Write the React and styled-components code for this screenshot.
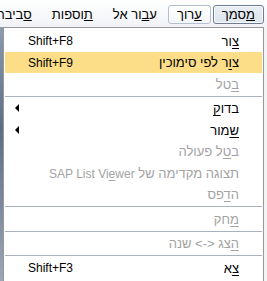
import styled, { createGlobalStyle } from "styled-components";

const GlobalStyle = createGlobalStyle`
    html, body {
        margin: 0;
        padding: 0;
        overflow: hidden;
    }
    body {
        font-family: "Liberation Sans", "DejaVu Sans", sans-serif;
        font-size: 13px;
        color: #000;
    }
`

const LatinText = styled.span`
    font-size: 12px;
`

const menuBar = [
    { id: 'doc', label: <><u>מ</u>סמך</>, state: 'open' },
    { id: 'edit', label: <><u>ע</u>רוך</>, state: 'hover' },
    { id: 'goto', label: <>ע<u>ב</u>ור אל</> },
    { id: 'extras', label: <><u>ת</u>וספות</> },
    { id: 'env', label: <><u>ס</u>ביבה</> },
];

const items = [
    { label: <><u>צ</u>ור</>, shortcut: 'Shift+F8' },
    { label: <>צ<u>ו</u>ר לפי סימוכין</>, shortcut: 'Shift+F9', active: true },
    { label: <><u>ב</u>טל</>, disabled: true },
    { separator: true },
    { label: <>בדו<u>ק</u></>, submenu: true },
    { label: <><u>ש</u>מור</>, submenu: true },
    { label: <>ב<u>ט</u>ל פעולה</>, disabled: true },
    { label: <>תצוגה מקדימה של <LatinText>SAP List Vi<u>e</u>wer</LatinText></>, disabled: true },
    { label: <>ה<u>ד</u>פס</>, disabled: true },
    { separator: true },
    { label: <><u>מ</u>חק</>, disabled: true },
    { separator: true },
    { label: <><u>ה</u>צג &lt;-&gt; שנה</>, disabled: true },
    { separator: true },
    { label: <><u>צ</u>א</>, shortcut: 'Shift+F3' },
];

export default function App() {
    return (
        <Screen>
            <GlobalStyle/>
            <MenuBar>
                {menuBar.map(({id, label, state}) => (
                    <BarItem key={id} $state={state}>{label}</BarItem>
                ))}
            </MenuBar>
            <Window>
                <LeftStrip/>
                <RightStrip/>
            </Window>
            <Dropdown>
                {items.map((item, i) => item.separator
                    ? <Separator key={i}/>
                    : (
                        <Item key={i} $active={item.active} $disabled={item.disabled}>
                            <Label>{item.label}</Label>
                            {item.shortcut && <Shortcut>{item.shortcut}</Shortcut>}
                            {item.submenu && <Arrow/>}
                        </Item>
                    ))}
            </Dropdown>
        </Screen>
    )
}

const Screen = styled.div`
    position: relative;
    width: 267px;
    height: 281px;
    display: flex;
    flex-direction: column;
    background: #eef1f5;
    overflow: hidden;
`
const MenuBar = styled.div`
    direction: rtl;
    display: flex;
    align-items: center;
    height: 27px;
    padding: 1px 3px 0 0;
    box-sizing: border-box;
    background: linear-gradient(#ffffff, #f1f3f7);
    gap: 2px;
    white-space: nowrap;
`
const BarItem = styled.div`
    flex-shrink: 0;
    height: 17px;
    line-height: 17px;
    padding: 0 8px;
    border: 1px solid ${props => props.$state === 'open' ? "#6e7d96" : props.$state === 'hover' ? "#b4bfd0" : "transparent"};
    border-radius: 3px;
    background: ${props => props.$state === 'open'
        ? "linear-gradient(#e9edf3, #dfe5ee)"
        : props.$state === 'hover' ? "linear-gradient(#ffffff, #f4f6f9)" : "transparent"};
    box-shadow: ${props => props.$state === 'open' ? "inset 0 0 0 1px #f6f8fb" : "none"};
`
const Window = styled.div`
    flex: 1;
    display: flex;
    justify-content: space-between;
`
const LeftStrip = styled.div`
    width: 3px;
    background: linear-gradient(#8c9bb0, #5d6d85 40%, #9aa7b8);
`
const RightStrip = styled.div`
    width: 3px;
    background: #f4f4f4;
`
const Dropdown = styled.div`
    position: absolute;
    top: 27px;
    left: 3px;
    width: 261px;
    height: 256px;
    box-sizing: border-box;
    border: 1px solid #979797;
    background: #fff;
    padding: 2px 1px;
    display: flex;
    flex-direction: column;
`
const Item = styled.div`
    direction: rtl;
    position: relative;
    display: flex;
    align-items: center;
    justify-content: space-between;
    height: 21.5px;
    flex-shrink: 0;
    padding: 1px 23px 0 23px;
    box-sizing: border-box;
    white-space: nowrap;
    background: ${props => props.$active ? "#fcdd88" : "transparent"};
    color: ${props => props.$disabled ? "#a3a3a3" : "#000"};
`
const Label = styled.span`
    u {
        text-decoration-thickness: 1px;
        text-underline-offset: 2px;
    }
`
const Shortcut = styled.span`
    direction: ltr;
    font-size: 12px;
`
const Arrow = styled.span`
    position: absolute;
    left: 10px;
    top: 50%;
    margin-top: -4px;
    width: 0;
    height: 0;
    border-top: 4px solid transparent;
    border-bottom: 4px solid transparent;
    border-right: 4px solid #000;
`
const Separator = styled.div`
    height: 3px;
    flex-shrink: 0;
    display: flex;
    align-items: center;
    &::before {
        content: "";
        flex: 1;
        height: 1px;
        background: #a9b1bf;
    }
`
